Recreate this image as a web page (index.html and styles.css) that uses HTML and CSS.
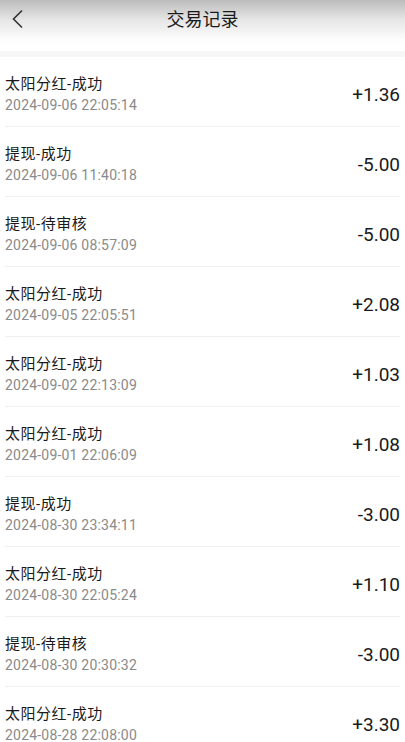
FILE: index.html
```html
<!DOCTYPE html>
<html lang="zh-CN">
<head>
    <meta charset="UTF-8">
    <title>交易记录</title>
    <link rel="stylesheet" href="styles.css">
</head>
<body>
<div class="header">
    <span class="back">
        <svg width="14" height="20" viewBox="0 0 14 20"><path d="M11 1.5 L2.5 10 L11 18.5" fill="none" stroke="#333" stroke-width="1.6"/></svg>
    </span>
    <div class="title">交易记录</div>
</div>
<div class="gap"></div>
<ul class="list">
    <li class="item"><div class="info"><div class="name">太阳分红-成功</div><div class="time">2024-09-06 22:05:14</div></div><div class="amount">+1.36</div></li>
    <li class="item"><div class="info"><div class="name">提现-成功</div><div class="time">2024-09-06 11:40:18</div></div><div class="amount">-5.00</div></li>
    <li class="item"><div class="info"><div class="name">提现-待审核</div><div class="time">2024-09-06 08:57:09</div></div><div class="amount">-5.00</div></li>
    <li class="item"><div class="info"><div class="name">太阳分红-成功</div><div class="time">2024-09-05 22:05:51</div></div><div class="amount">+2.08</div></li>
    <li class="item"><div class="info"><div class="name">太阳分红-成功</div><div class="time">2024-09-02 22:13:09</div></div><div class="amount">+1.03</div></li>
    <li class="item"><div class="info"><div class="name">太阳分红-成功</div><div class="time">2024-09-01 22:06:09</div></div><div class="amount">+1.08</div></li>
    <li class="item"><div class="info"><div class="name">提现-成功</div><div class="time">2024-08-30 23:34:11</div></div><div class="amount">-3.00</div></li>
    <li class="item"><div class="info"><div class="name">太阳分红-成功</div><div class="time">2024-08-30 22:05:24</div></div><div class="amount">+1.10</div></li>
    <li class="item"><div class="info"><div class="name">提现-待审核</div><div class="time">2024-08-30 20:30:32</div></div><div class="amount">-3.00</div></li>
    <li class="item"><div class="info"><div class="name">太阳分红-成功</div><div class="time">2024-08-28 22:08:00</div></div><div class="amount">+3.30</div></li>
</ul>
</body>
</html>
```

FILE: styles.css
```css
*{
    margin:0;padding:0;
    box-sizing: border-box;
}
body{
    background:#fff;
    font-family: Roboto, "Noto Sans CJK SC", sans-serif;
    color:#1a1a1a;
}
.header{
    height:51px;
    display:flex;
    align-items:flex-start;
    justify-content:center;
    position:relative;
    background:linear-gradient(to bottom,#bcbcbc 0,#e6e6e6 20px,#fdfdfd 40px,#fff 51px);
}
.back{
    position:absolute;
    left:11px;
    top:9px;
}
.title{
    font-size:18px;
    line-height:40px;
    color:#1a1a1a;
}
.gap{
    height:6px;
    background:#f6f6f6;
}
.list{
    list-style:none;
    background:#fff;
}
.item{
    height:70px;
    margin:0 5px;
    padding-top:16px;
    border-bottom:1px solid #f0f0f0;
    display:flex;
    justify-content:space-between;
}
.name{
    font-size:15px;
    line-height:22px;
    letter-spacing:0.5px;
}
.time{
    font-size:14px;
    line-height:20px;
    letter-spacing:0.2px;
    color:#8a8a8a;
}
.amount{
    font-size:19px;
    line-height:22px;
    margin-top:11px;
}
```
